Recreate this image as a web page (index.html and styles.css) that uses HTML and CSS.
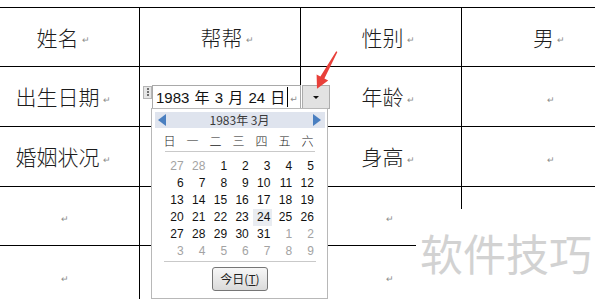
FILE: index.html
```html
<!DOCTYPE html>
<html lang="zh-CN">
<head>
<meta charset="utf-8">
<title>日期控件</title>
<link rel="stylesheet" href="styles.css">
</head>
<body>
<div class="page">
  <div class="doc-table">
    <div class="cell"><span class="txt">姓名</span><span class="pm">↵</span></div>
    <div class="cell"><span class="txt">帮帮</span><span class="pm">↵</span></div>
    <div class="cell"><span class="txt">性别</span><span class="pm">↵</span></div>
    <div class="cell"><span class="txt">男</span><span class="pm">↵</span></div>

    <div class="cell"><span class="txt">出生日期</span><span class="pm">↵</span></div>
    <div class="cell"></div>
    <div class="cell"><span class="txt">年龄</span><span class="pm">↵</span></div>
    <div class="cell"><span class="pm">↵</span></div>

    <div class="cell"><span class="txt">婚姻状况</span><span class="pm">↵</span></div>
    <div class="cell"></div>
    <div class="cell"><span class="txt">身高</span><span class="pm">↵</span></div>
    <div class="cell"><span class="pm">↵</span></div>

    <div class="cell"><span class="pm">↵</span></div>
    <div class="cell"></div>
    <div class="cell"><span class="pm">↵</span></div>
    <div class="cell"></div>

    <div class="cell"><span class="pm">↵</span></div>
    <div class="cell"></div>
    <div class="cell"><span class="pm">↵</span></div>
    <div class="cell"></div>
  </div>

  <div class="date-control">
    <div class="grip"><span class="grip-dots"></span></div>
    <div class="field">
      <span class="field-text">1983 年 3 月 24 日</span><span class="caret"></span><span class="field-pm">↵</span>
    </div>
    <div class="drop-btn"><span class="drop-tri"></span></div>
  </div>

  <svg class="arrow" viewBox="305 45 40 50" width="40" height="50">
    <polygon points="317,88.8 328.2,80.4 324.4,78.6 337.4,52 336.2,51.3 320.4,76.6 316.6,74.6" fill="#e8403a"/>
  </svg>

  <div class="calendar">
    <div class="cal-head">
      <span class="nav nav-prev"></span>
      <span class="cal-title">1983年 3月</span>
      <span class="nav nav-next"></span>
    </div>
    <div class="weekdays">
      <span>日</span><span>一</span><span>二</span><span>三</span><span>四</span><span>五</span><span>六</span>
    </div>
    <div class="sep sep-week"></div>
    <div class="days">
      <span class="other">27</span><span class="other">28</span><span>1</span><span>2</span><span>3</span><span>4</span><span>5</span>
      <span>6</span><span>7</span><span>8</span><span>9</span><span>10</span><span>11</span><span>12</span>
      <span>13</span><span>14</span><span>15</span><span>16</span><span>17</span><span>18</span><span>19</span>
      <span>20</span><span>21</span><span>22</span><span>23</span><span><b class="sel">24</b></span><span>25</span><span>26</span>
      <span>27</span><span>28</span><span>29</span><span>30</span><span>31</span><span class="other">1</span><span class="other">2</span>
      <span class="other">3</span><span class="other">4</span><span class="other">5</span><span class="other">6</span><span class="other">7</span><span class="other">8</span><span class="other">9</span>
    </div>
    <div class="sep sep-days"></div>
    <div class="today-btn">今日(<u>T</u>)</div>
  </div>

  <div class="watermark">软件技巧</div>
</div>
</body>
</html>
```

FILE: styles.css
```css
* { box-sizing: border-box; }

html, body {
  margin: 0;
  padding: 0;
  background: #fff;
}

.page {
  position: relative;
  width: 595px;
  height: 299px;
  overflow: hidden;
  font-family: "Noto Sans CJK SC", "Liberation Sans", sans-serif;
}

/* ---------- document table ---------- */
.doc-table {
  display: grid;
  grid-template-columns: 167px 161px 161px 161px;
  grid-template-rows: 59px 60px 60px 59px 60px;
  width: max-content;
  margin-left: -28px;
  margin-top: 7px;
  border-top: 1px solid #000;
  border-left: 1px solid #000;
}

.cell {
  display: flex;
  align-items: center;
  justify-content: center;
  padding-left: 6px;
  border-right: 1px solid #000;
  border-bottom: 1px solid #000;
  font-size: 21px;
  font-weight: 300;
  color: #1c1c1c;
  white-space: nowrap;
}

.txt {
  line-height: 1;
}

.pm {
  display: inline-block;
  width: 0;
  overflow: visible;
  padding-left: 3px;
  font-family: "DejaVu Sans", sans-serif;
  font-size: 9px;
  color: #8c8c8c;
  line-height: 1;
  margin-top: 7px;
}

/* ---------- date content control ---------- */
.date-control {
  position: absolute;
  left: 143px;
  top: 85px;
  display: flex;
  align-items: flex-start;
  z-index: 2;
}

.grip {
  width: 9px;
  height: 13px;
  margin-top: 1px;
  border: 1px solid #b5b5b5;
  background: #e6e6e6;
  display: flex;
  justify-content: center;
  padding-top: 1px;
}

.grip-dots {
  width: 2px;
  height: 9px;
  background: repeating-linear-gradient(#6e6e6e 0 2px, transparent 2px 3px);
}

.field {
  width: 149px;
  height: 24px;
  border: 1px solid #a9a9a9;
  background: #fff;
  display: flex;
  align-items: center;
  padding-left: 3px;
}

.field-text {
  font-family: "Liberation Sans", "Noto Sans CJK SC", sans-serif;
  font-size: 15px;
  word-spacing: 1px;
  color: #111;
  white-space: nowrap;
  line-height: 1;
}

.caret {
  width: 1px;
  height: 20px;
  background: #000;
  margin-left: 2px;
}

.field-pm {
  font-family: "DejaVu Sans", sans-serif;
  font-size: 9px;
  color: #8c8c8c;
  margin-left: 2px;
  margin-top: 4px;
}

.drop-btn {
  width: 28px;
  height: 24px;
  margin-left: 1px;
  border: 1px solid #acacac;
  background: #e2e2e2;
  display: flex;
  align-items: center;
  justify-content: center;
}

.drop-tri {
  width: 0;
  height: 0;
  border-left: 3px solid transparent;
  border-right: 3px solid transparent;
  border-top: 3px solid #111;
}

.arrow {
  position: absolute;
  left: 305px;
  top: 45px;
  z-index: 4;
}

/* ---------- calendar popup ---------- */
.calendar {
  position: absolute;
  left: 151px;
  top: 108px;
  width: 177px;
  height: 191px;
  border: 1px solid #b8b8b8;
  background: #fff;
  display: flex;
  flex-direction: column;
  align-items: flex-start;
  z-index: 3;
}

.cal-head {
  margin: 3px 0 0 3px;
  width: 170px;
  height: 16px;
  background: #dfe4ee;
  display: flex;
  align-items: center;
  justify-content: space-between;
  padding: 0 4px 0 3px;
}

.nav {
  width: 0;
  height: 0;
  border-top: 6px solid transparent;
  border-bottom: 6px solid transparent;
}

.nav-prev { border-right: 8px solid #4a7fc0; }
.nav-next { border-left: 8px solid #4a7fc0; }

.cal-title {
  font-size: 12px;
  line-height: 1;
  color: #3a3a3a;
  white-space: nowrap;
}

.weekdays {
  margin: 3px 0 0 6px;
  display: grid;
  grid-template-columns: repeat(7, 23px);
  height: 20px;
  align-items: center;
  justify-items: center;
  font-size: 12px;
  font-weight: 300;
  color: #222;
  line-height: 1;
}

.sep {
  height: 1px;
  background: #c9c9c9;
}

.sep-week {
  margin-left: 13px;
  width: 150px;
}

.days {
  margin: 5px 0 0 10px;
  display: grid;
  grid-template-columns: repeat(7, 21.7px);
  grid-auto-rows: 17px;
  align-items: center;
  justify-items: end;
  font-family: "Liberation Sans", sans-serif;
  font-size: 12px;
  line-height: 1;
  color: #111;
}

.days .other { color: #a3a3a3; }

.sel {
  font-weight: normal;
  background: #e9ecf1;
  padding: 1px 2px 2px 4px;
  margin-right: -2px;
}

.sep-days {
  margin: 2px 0 0 12px;
  width: 152px;
}

.today-btn {
  margin: 5px 0 0 60px;
  width: 56px;
  height: 24px;
  border: 1px solid #767676;
  border-radius: 3px;
  background: linear-gradient(#f7f7f7, #dadada);
  display: flex;
  align-items: center;
  justify-content: center;
  font-size: 12px;
  color: #222;
  line-height: 1;
}

.today-btn u {
  text-underline-offset: 1px;
}

/* ---------- watermark ---------- */
.watermark {
  position: absolute;
  left: 416px;
  top: 209px;
  right: 0;
  bottom: 0;
  background: #fff;
  padding: 22px 0 0 4px;
  font-size: 43px;
  line-height: 1;
  color: #d2d2d2;
  white-space: nowrap;
  z-index: 1;
}
```
